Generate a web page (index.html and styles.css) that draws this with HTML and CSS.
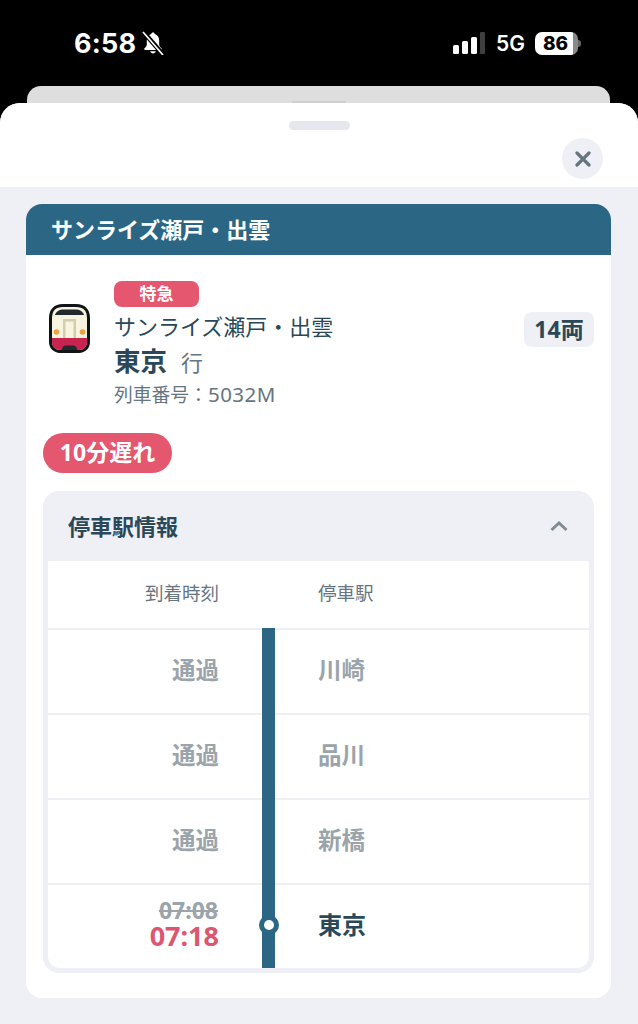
FILE: index.html
```html
<!DOCTYPE html>
<html lang="ja">
<head>
<meta charset="utf-8">
<title>サンライズ瀬戸・出雲</title>
<link rel="stylesheet" href="styles.css">
</head>
<body>
<div class="status">
  <div class="status-left">
    <span class="clock">6:58</span>
    <svg class="bell" viewBox="0 0 24 24" width="24" height="24">
      <path d="M12 1.500c-1 0-1.700.7-1.800 1.600C7.300 4 5.800 6.500 5.800 9.500v4c0 1.600-1 2.600-2.300 3.700-.7.600-.3 1.700.7 1.700h15.600c1 0 1.400-1.100.7-1.700-1.300-1.100-2.300-2.100-2.300-3.700v-4c0-3-1.500-5.500-4.400-6.400-.1-.9-.8-1.600-1.800-1.600z" fill="#fff"/>
      <path d="M9.200 20.300h5.600c-.3 1.300-1.500 2.200-2.800 2.200s-2.500-.9-2.800-2.200z" fill="#fff"/>
      <path d="M2 .5 22 23.500" stroke="#000" stroke-width="4.600"/>
      <path d="M2 1 22 24" stroke="#fff" stroke-width="1.700"/>
    </svg>
  </div>
  <div class="status-right">
    <svg class="signal" viewBox="0 0 32 24" width="32" height="24">
      <rect x="0" y="14" width="6" height="9" rx="1.500" fill="#fff"/>
      <rect x="9" y="10" width="6" height="13" rx="1.500" fill="#fff"/>
      <rect x="18" y="6" width="6" height="17" rx="1.500" fill="#fff"/>
      <rect x="27" y="1" width="5" height="22" rx="1" fill="#3f3f3f"/>
    </svg>
    <span class="net">5G</span>
    <span class="battery"><span class="battery-level">86</span></span>
    <span class="battery-cap"></span>
  </div>
</div>

<div class="back-sheet"><span class="back-handle"></span></div>

<main class="sheet">
  <div class="sheet-top">
    <span class="grabber"></span>
    <div class="close-row">
      <button class="close" aria-label="閉じる">
        <svg viewBox="0 0 16 16" width="16" height="16"><path d="M2 2 14 14M14 2 2 14" stroke="#66757f" stroke-width="3.200" stroke-linecap="round"/></svg>
      </button>
    </div>
  </div>

  <div class="body">
    <section class="card">
      <h1 class="card-title">サンライズ瀬戸・出雲</h1>
      <div class="card-body">
        <div class="train">
          <svg class="train-icon" viewBox="0 0 41 49" width="41" height="49">
            <path d="M14 1.500h13C35 1.500 39.500 6 39.500 14v24c0 5.500-4 9.500-9.500 9.500H11c-5.500 0-9.500-4-9.500-9.500V14C1.500 6 6 1.500 14 1.500z" fill="#f8f4df" stroke="#101416" stroke-width="3"/>
            <path d="M6 11c1-3.500 4-5.500 9-5.500h11c5 0 8 2 9 5.500z" fill="#20292d"/>
            <path d="M14 34V15h13v19h-2.500V17.500h-8V34z" fill="#cfcfad"/>
            <circle cx="7.500" cy="28" r="2.800" fill="#eda33a"/>
            <circle cx="33.500" cy="28" r="2.800" fill="#eda33a"/>
            <path d="M3 34h35v4c0 5-3.500 8-8 8H11c-4.500 0-8-3-8-8z" fill="#c9234f"/>
            <path d="M13 46c0-3 1.500-4.500 4-4.500h7c2.500 0 4 1.500 4 4.500z" fill="#20292d"/>
          </svg>
          <div class="train-info">
            <span class="badge">特急</span>
            <div class="train-name">サンライズ瀬戸・出雲</div>
            <div class="dest"><strong>東京</strong><span>行</span></div>
            <div class="train-no">列車番号：<span class="train-code">5032M</span></div>
          </div>
          <span class="cars">14両</span>
        </div>

        <div class="delay">10分遅れ</div>

        <section class="stops">
          <header class="stops-head">
            <h2>停車駅情報</h2>
            <svg viewBox="0 0 20 12" width="20" height="12"><path d="M2.500 10 10 3l7.500 7" fill="none" stroke="#7f8c93" stroke-width="3"/></svg>
          </header>
          <div class="stops-table">
            <div class="row row-head">
              <span class="time">到着時刻</span>
              <span></span>
              <span class="station">停車駅</span>
            </div>
            <div class="row">
              <span class="time pass">通過</span>
              <span class="line"></span>
              <span class="station pass">川崎</span>
            </div>
            <div class="row">
              <span class="time pass">通過</span>
              <span class="line"></span>
              <span class="station pass">品川</span>
            </div>
            <div class="row">
              <span class="time pass">通過</span>
              <span class="line"></span>
              <span class="station pass">新橋</span>
            </div>
            <div class="row">
              <span class="time times">
                <s class="old">07:08</s>
                <b class="new">07:18</b>
              </span>
              <span class="line"><i class="dot"></i></span>
              <span class="station stop">東京</span>
            </div>
          </div>
        </section>
      </div>
    </section>
  </div>
</main>
</body>
</html>
```

FILE: styles.css
```css
* { box-sizing: border-box; }

html, body {
  margin: 0;
  height: 1024px;
  overflow: hidden;
  background: #000;
  font-family: "Noto Sans", "Noto Sans CJK JP", sans-serif;
}

.status {
  height: 86px;
  padding: 26px 57px 0 74px;
  display: flex;
  justify-content: space-between;
  align-items: flex-start;
  color: #fff;
}

.status-left, .status-right {
  display: flex;
  align-items: center;
  height: 34px;
}

.clock {
  font-family: Inter, sans-serif;
  font-weight: 700;
  font-size: 27px;
  letter-spacing: 0.2px;
}

.bell { margin-left: 5px; }

.signal { margin-right: 11px; }

.net {
  font-family: Inter, sans-serif;
  font-weight: 600;
  font-size: 21px;
  margin-right: 10px;
}

.battery {
  width: 43px;
  height: 23px;
  border-radius: 7px;
  background: linear-gradient(90deg, #fff 0 88%, #8a8a8a 88%);
  display: flex;
  align-items: center;
  justify-content: center;
  padding-right: 2px;
}

.battery-level {
  font-family: Inter, sans-serif;
  font-weight: 800;
  font-size: 19px;
  line-height: 1;
  color: #000;
}

.battery-cap {
  width: 3px;
  height: 7px;
  border-radius: 0 3px 3px 0;
  background: #666;
}

.back-sheet {
  height: 17px;
  margin: 0 28px 0 27px;
  background: #dedede;
  border-radius: 14px 14px 0 0;
  display: flex;
  justify-content: center;
  align-items: flex-end;
}

.back-handle {
  width: 54px;
  height: 2px;
  background: #cfcfcf;
}

.sheet {
  height: 921px;
  background: #efeff6;
  border-radius: 20px 20px 0 0;
  overflow: hidden;
}

.sheet-top {
  height: 84px;
  background: #fff;
  padding: 18px 35px 0 0;
  display: flex;
  flex-direction: column;
}

.grabber {
  align-self: center;
  width: 61px;
  height: 9px;
  margin-left: 35px;
  border-radius: 5px;
  background: #e6e6ee;
}

.close-row {
  display: flex;
  justify-content: flex-end;
  margin-top: 8px;
}

.close {
  width: 41px;
  height: 41px;
  padding: 0;
  border: 0;
  border-radius: 50%;
  background: #efeff6;
  display: flex;
  align-items: center;
  justify-content: center;
}

.body { padding: 17px 27px 0 26px; }

.card {
  height: 794px;
  background: #fff;
  border-radius: 16px;
  overflow: hidden;
}

.card-title {
  margin: 0;
  height: 51px;
  padding-left: 25px;
  background: #2b6684;
  color: #fff;
  font-size: 22px;
  font-weight: 700;
  line-height: 50px;
}

.card-body { padding: 26px 17px 0; }

.train {
  display: flex;
  align-items: flex-start;
  padding-left: 6px;
}

.train-icon { flex: none; margin-top: 23px; }

.train-info {
  flex: 1;
  margin-left: 24px;
  color: #2a4858;
}

.badge {
  display: block;
  width: 85px;
  height: 26px;
  border-radius: 8px;
  background: #e5566f;
  color: #fff;
  font-size: 17px;
  font-weight: 700;
  line-height: 25px;
  text-align: center;
}

.train-name {
  margin-top: 3px;
  font-size: 22px;
  line-height: 32px;
}

.dest {
  display: flex;
  align-items: baseline;
  height: 36px;
  margin-top: 1px;
  line-height: 36px;
}

.dest strong { font-size: 26.500px; font-weight: 700; }

.dest span {
  margin-left: 14px;
  font-size: 22px;
  color: #66757f;
}

.train-no {
  margin-top: 1px;
  font-size: 18.800px;
  line-height: 28px;
  color: #66757f;
  height: 29px;
}

.train-code {
  font-size: 20.500px;
  letter-spacing: 0.500px;
}

.cars {
  flex: none;
  width: 70px;
  height: 35px;
  margin-top: 31px;
  border-radius: 8px;
  background: #efeff6;
  color: #2a4858;
  font-size: 23px;
  font-weight: 700;
  line-height: 35px;
  text-align: center;
}

.delay {
  width: 129px;
  height: 40px;
  margin-top: 24px;
  border-radius: 20px;
  background: #e5566f;
  color: #fff;
  font-size: 23px;
  font-weight: 700;
  line-height: 38px;
  text-align: center;
}

.stops {
  margin-top: 18px;
  padding: 0 5px 5px;
  border-radius: 16px;
  background: #efeff6;
}

.stops-head {
  height: 70px;
  padding: 0 20px 0 20px;
  display: flex;
  align-items: center;
  justify-content: space-between;
}

.stops-head h2 {
  margin: 0 0 2px;
  font-size: 22px;
  font-weight: 700;
  color: #2a4858;
}

.stops-table {
  background: #fff;
  border-radius: 0 0 12px 12px;
  overflow: hidden;
}

.row {
  display: grid;
  grid-template-columns: 171px 13px 1fr;
  column-gap: 43px;
  align-items: center;
  height: 85px;
  border-top: 2px solid #eeeef3;
}

.row-head {
  height: 67px;
  border-top: 0;
  font-size: 18.500px;
  color: #66757f;
}

.time, .station { padding-bottom: 6px; }

.time { text-align: right; }

.line {
  align-self: stretch;
  margin-top: -2px;
  background: #2b6684;
  position: relative;
}

.pass {
  font-size: 23.500px;
  font-weight: 700;
  color: #9aa4aa;
}

.stop {
  font-size: 24px;
  font-weight: 700;
  color: #2a4858;
}

.times {
  display: flex;
  flex-direction: column;
  align-items: flex-end;
  padding-bottom: 7px;
}

.old {
  font-size: 23px;
  font-weight: 700;
  line-height: 24px;
  color: #9aa4aa;
  margin-right: 1px;
}

.new {
  font-size: 27px;
  font-weight: 700;
  line-height: 27px;
  color: #dc5670;
}

.dot {
  position: absolute;
  left: -3.500px;
  top: 32px;
  width: 20px;
  height: 20px;
  border: 5px solid #2b6684;
  border-radius: 50%;
  background: #fff;
}
```
